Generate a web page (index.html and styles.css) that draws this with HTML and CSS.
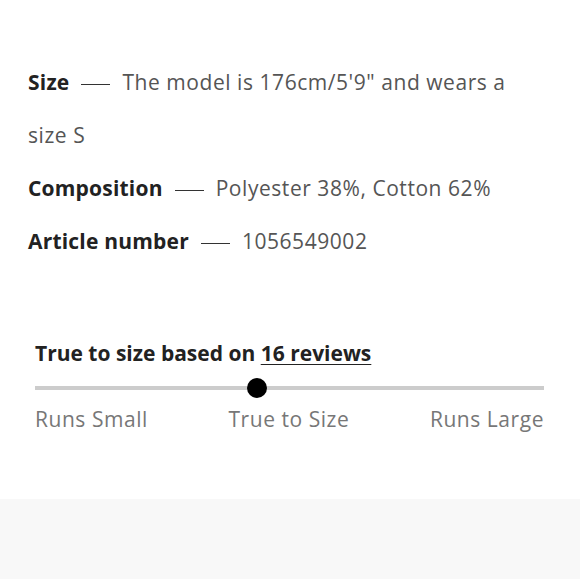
FILE: index.html
```html
<!DOCTYPE html>
<html>
<head>
<meta charset="utf-8">
<link rel="stylesheet" href="styles.css">
</head>
<body>
<main class="page">
  <dl class="details">
    <div class="detail"><dt class="label">Size</dt><dd class="value">The model is 176cm/5'9" and wears a size S</dd></div>
    <div class="detail"><dt class="label">Composition</dt><dd class="value">Polyester 38%, Cotton 62%</dd></div>
    <div class="detail"><dt class="label">Article number</dt><dd class="value">1056549002</dd></div>
  </dl>
  <section class="fit">
    <h3 class="fit-title">True to size based on <a class="fit-link" href="#">16 reviews</a></h3>
    <div class="track"><span class="knob"></span></div>
    <div class="fit-labels"><span>Runs Small</span><span>True to Size</span><span>Runs Large</span></div>
  </section>
</main>
<footer class="footer"></footer>
</body>
</html>
```
FILE: styles.css
```css
html, body {
  margin: 0;
  padding: 0;
  background: #fff;
}
body {
  font-family: "Open Sans", "Liberation Sans", sans-serif;
  font-size: 21px;
  letter-spacing: 0.55px;
  color: #222;
  width: 580px;
  height: 579px;
  overflow: hidden;
  display: flex;
  flex-direction: column;
}
.page {
  flex: 0 0 499px;
}
.details {
  margin: 0;
  padding: 56px 0 0 28px;
  width: 500px;
}
.detail {
  display: block;
  line-height: 53px;
}
.label {
  display: inline;
  font-weight: 700;
  letter-spacing: 0.2px;
  color: #222;
}
.label::after {
  content: "";
  display: inline-block;
  width: 29px;
  height: 1px;
  background: #333;
  vertical-align: middle;
  margin: 0 12px 0 12px;
}
.value {
  display: inline;
  margin: 0;
  color: #555;
}
.fit {
  padding: 0 36px 0 35px;
  margin-top: 70px;
}
.fit-title {
  margin: 0;
  font-size: 21px;
  font-weight: 700;
  letter-spacing: 0;
  line-height: 30px;
  color: #222;
}
.fit-link {
  color: #222;
  text-decoration: underline;
  text-decoration-thickness: 1px;
  text-underline-offset: 3px;
}
.track {
  position: relative;
  height: 4px;
  background: #cccccc;
  margin-top: 18px;
}
.knob {
  position: absolute;
  left: 212px;
  top: -8px;
  width: 20px;
  height: 20px;
  border-radius: 50%;
  background: #000;
}
.fit-labels {
  display: flex;
  justify-content: space-between;
  margin-top: 15px;
  line-height: 28px;
  color: #777;
}
.footer {
  flex: 1;
  background: #f8f8f8;
}
```
